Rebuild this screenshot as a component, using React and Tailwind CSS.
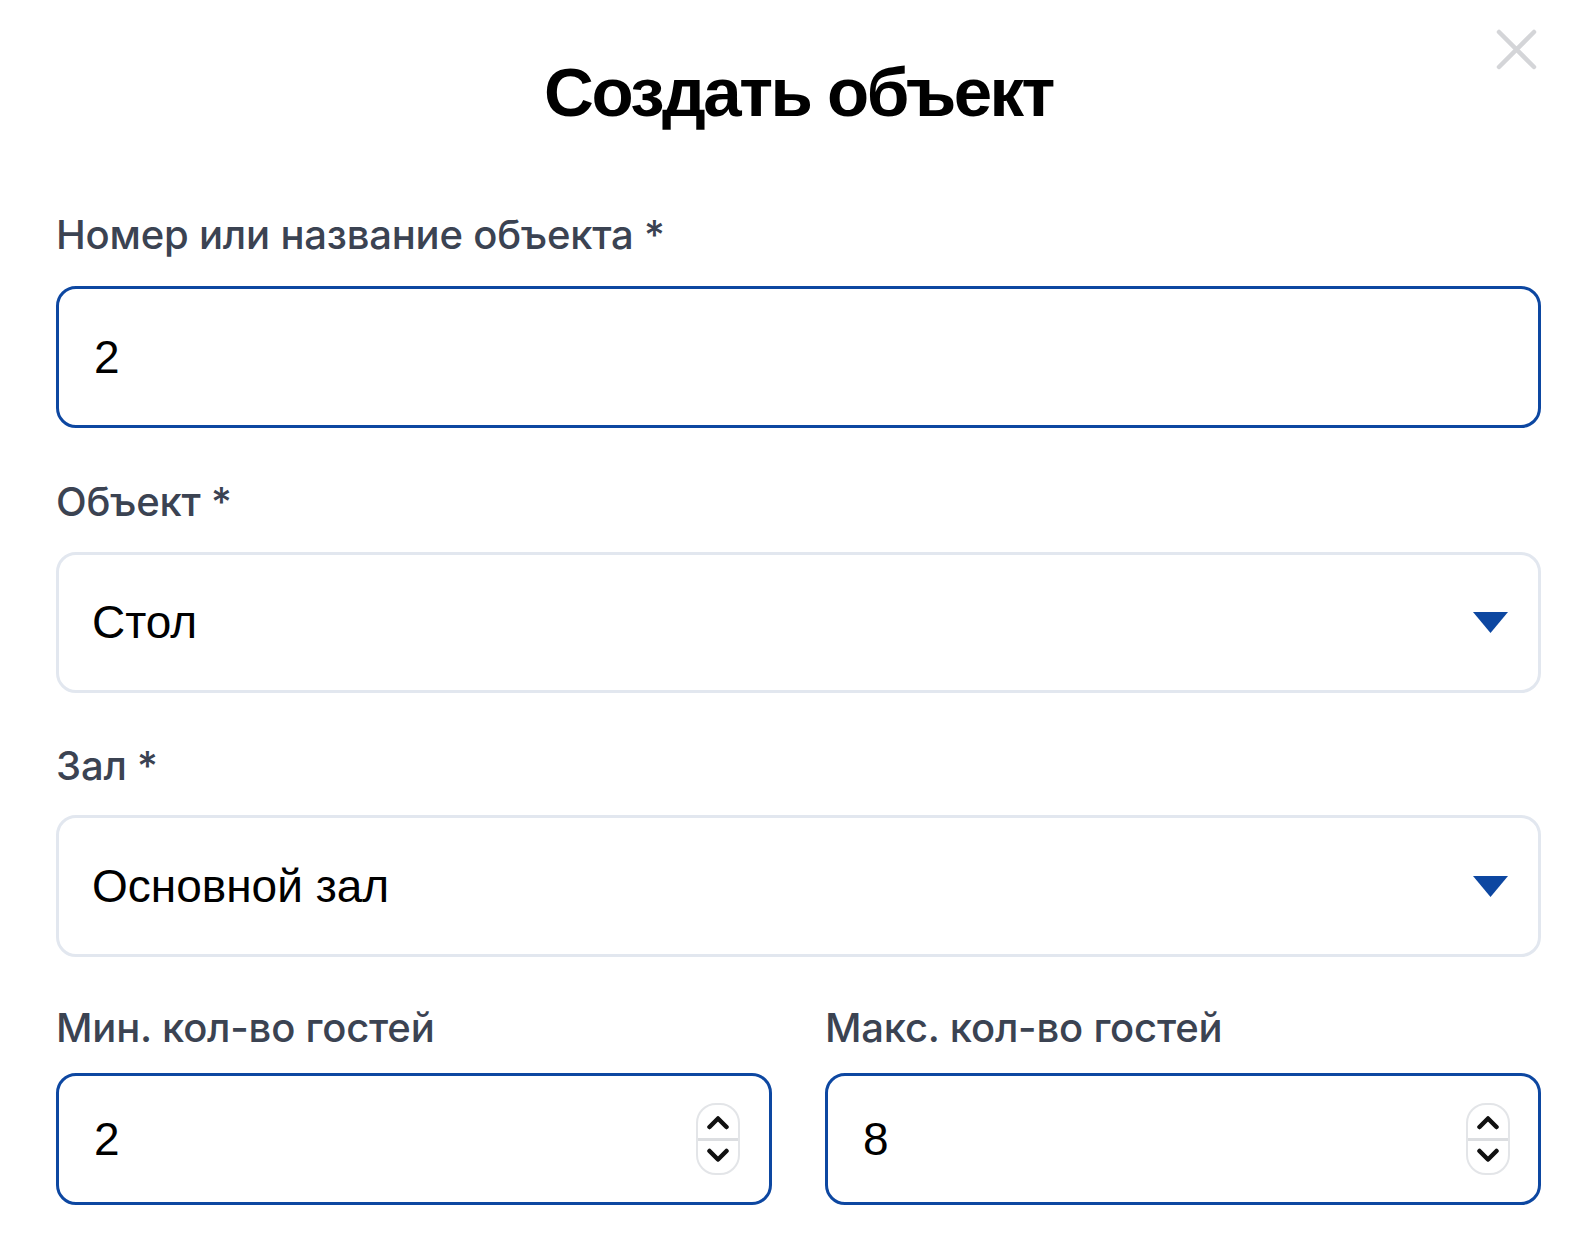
import React from "react";

const label = "font-['Inter',sans-serif] text-[40px] leading-[48px] font-medium tracking-[-0.2px] text-[#3b4352]";
const field = "font-['Liberation_Sans',Arial,sans-serif] text-[46px] text-black";

const Triangle = () => (
  <svg width="35" height="21" viewBox="0 0 35 21">
    <path d="M0 0 H35 L17.5 21 Z" fill="#0d47a1" />
  </svg>
);

const Spinner = () => (
  <div className="w-[44px] h-[72px] rounded-[20px] border-2 border-[#e3e5e8] flex flex-col overflow-hidden">
    <div className="flex-1 flex items-center justify-center pt-[2px]">
      <svg width="24" height="15" viewBox="0 0 24 15">
        <path d="M3.5 12 L12 3.5 L20.5 12" fill="none" stroke="#111" strokeWidth="4.5" strokeLinecap="round" strokeLinejoin="round" />
      </svg>
    </div>
    <div className="h-[3px] bg-[#dcdee1]" />
    <div className="flex-1 flex items-center justify-center pb-[2px]">
      <svg width="24" height="15" viewBox="0 0 24 15">
        <path d="M3.5 3 L12 11.5 L20.5 3" fill="none" stroke="#111" strokeWidth="4.5" strokeLinecap="round" strokeLinejoin="round" />
      </svg>
    </div>
  </div>
);

export default function App() {
  return (
    <div className="relative w-[1596px] h-[1240px] bg-white px-[56px] pt-[58px] pr-[55px] overflow-hidden">
      {/* close */}
      <button className="absolute top-[29px] right-[59px] w-[41px] h-[41px]">
        <svg width="41" height="41" viewBox="0 0 41 41">
          <path d="M3 3 L38 38 M38 3 L3 38" stroke="#d4d5d8" strokeWidth="4.5" strokeLinecap="round" />
        </svg>
      </button>

      <h1 className="text-center font-['Liberation_Sans',Arial,sans-serif] font-bold text-[69px] leading-[70px] tracking-[-2.5px] text-black">
        Создать объект
      </h1>

      <div className={`${label} mt-[83px]`}>Номер или название объекта *</div>
      <div className="mt-[27px] h-[142px] border-[3px] border-[#0d47a1] rounded-[20px] flex items-center pl-[35px]">
        <span className={field}>2</span>
      </div>

      <div className={`${label} mt-[50px]`}>Объект *</div>
      <div className="mt-[26px] h-[141px] border-[3px] border-[#e2e7ef] rounded-[20px] flex items-center justify-between pl-[33px] pr-[30px]">
        <span className={field}>Стол</span>
        <Triangle />
      </div>

      <div className={`${label} mt-[49px]`}>Зал *</div>
      <div className="mt-[25px] h-[142px] border-[3px] border-[#e2e7ef] rounded-[20px] flex items-center justify-between pl-[33px] pr-[30px]">
        <span className={field}>Основной зал</span>
        <Triangle />
      </div>

      <div className="mt-[47px] grid grid-cols-2 gap-x-[53px]">
        <div>
          <div className={label}>Мин. кол-во гостей</div>
          <div className="mt-[21px] h-[132px] border-[3px] border-[#0d47a1] rounded-[20px] flex items-center justify-between pl-[35px] pr-[29px]">
            <span className={field}>2</span>
            <Spinner />
          </div>
        </div>
        <div>
          <div className={label}>Макс. кол-во гостей</div>
          <div className="mt-[21px] h-[132px] border-[3px] border-[#0d47a1] rounded-[20px] flex items-center justify-between pl-[35px] pr-[28px]">
            <span className={field}>8</span>
            <Spinner />
          </div>
        </div>
      </div>
    </div>
  );
}
